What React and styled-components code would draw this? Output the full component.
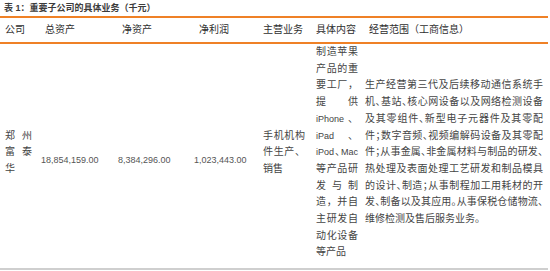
import React from "react";
import styled, { createGlobalStyle } from "styled-components";

const GlobalStyle = createGlobalStyle`
  html, body {
    margin: 0;
    padding: 0;
    background: #ffffff;
  }
  body {
    font-family: "Liberation Sans", "Noto Sans CJK SC", sans-serif;
    color: #444444;
  }
`;

const Page = styled.div`
  width: 550px;
  height: 271px;
  overflow: hidden;
`;

const Caption = styled.div`
  height: 16px;
  padding-left: 4px;
  font-size: 9px;
  line-height: 16px;
  font-weight: bold;
  color: #3c3c3c;
`;

const Table = styled.div`
  width: 548px;
  border-top: 2px solid #ef8126;
  border-bottom: 2px solid #cfcfcf;
`;

const Row = styled.div`
  display: grid;
  grid-template-columns: 38px 77px 76px 68px 53px 50px 186px;
  align-items: center;
`;

const HeadRow = styled(Row)`
  height: 24px;
  border-bottom: 2px solid #ef8126;
`;

const BodyRow = styled(Row)`
  height: 224px;
  box-sizing: border-box;
  padding-bottom: 7px;
`;

const Head = styled.div`
  padding-left: ${(p) => p.$pad}px;
  font-size: 10px;
  line-height: 14px;
  color: #2e2e2e;
  white-space: nowrap;
`;

const Cell = styled.div`
  padding-left: ${(p) => p.$pad}px;
  padding-top: ${(p) => p.$drop || 0}px;
  font-size: 10px;
  line-height: 16.7px;
`;

const Para = styled.div`
  width: ${(p) => p.$width}px;
  font-feature-settings: ${(p) => (p.$tight ? '"halt"' : "normal")};
`;

const Line = styled.span`
  display: block;
  white-space: nowrap;
  text-align: justify;
  text-align-last: ${(p) => (p.$last ? "left" : "justify")};
`;

const Latin = styled.span`
  font-size: 9px;
`;

const Narrow = styled.span`
  font-feature-settings: "halt";
`;

const Amount = styled.div`
  font-size: 9px;
  color: #555555;
`;

const Text = ({ width, lines, tight }) => (
  <Para $width={width} $tight={tight}>
    {lines.map((line, i) => (
      <Line key={i} $last={i === lines.length - 1}>
        {line}
      </Line>
    ))}
  </Para>
);

const company = ["郑 州", "富 泰", "华"];

const business = ["手机机构", "件生产、", "销售"];

const detail = [
  "制造苹果",
  "产品的重",
  "要工厂，",
  "提 供",
  <>
    <Latin>iPhone</Latin> 、
  </>,
  <>
    <Latin>iPad</Latin> 、
  </>,
  <>
    <Latin>iPod</Latin>
    <Narrow>、</Narrow>
    <Latin>Mac</Latin>
  </>,
  "等产品研",
  "发 与 制",
  "造，并自",
  "主研发自",
  "动化设备",
  "等产品",
];

const scope = [
  "生产经营第三代及后续移动通信系统手",
  "机、基站、核心网设备以及网络检测设备",
  "及其零组件、新型电子元器件及其零配",
  "件；数字音频、视频编解码设备及其零配",
  "件；从事金属、非金属材料与制品的研发、",
  "热处理及表面处理工艺研发和制品模具",
  "的设计、制造；从事制程加工用耗材的开",
  "发、制备以及其应用。从事保税仓储物流、",
  "维修检测及售后服务业务。",
];

const App = () => (
  <Page>
    <GlobalStyle />
    <Caption>表 1：重要子公司的具体业务（千元）</Caption>
    <Table>
      <HeadRow>
        <Head $pad={5}>公司</Head>
        <Head $pad={7}>总资产</Head>
        <Head $pad={7}>净资产</Head>
        <Head $pad={8}>净利润</Head>
        <Head $pad={4}>主营业务</Head>
        <Head $pad={4}>具体内容</Head>
        <Head $pad={7}>经营范围（工商信息）</Head>
      </HeadRow>
      <BodyRow>
        <Cell $pad={5}>
          <Text width={27} lines={company} />
        </Cell>
        <Cell $pad={3} $drop={16}>
          <Amount>18,854,159.00</Amount>
        </Cell>
        <Cell $pad={3} $drop={16}>
          <Amount>8,384,296.00</Amount>
        </Cell>
        <Cell $pad={3} $drop={16}>
          <Amount>1,023,443.00</Amount>
        </Cell>
        <Cell $pad={4}>
          <Text width={42} lines={business} />
        </Cell>
        <Cell $pad={4}>
          <Text width={42} lines={detail} />
        </Cell>
        <Cell $pad={3}>
          <Text width={178} lines={scope} tight />
        </Cell>
      </BodyRow>
    </Table>
  </Page>
);

export default App;
